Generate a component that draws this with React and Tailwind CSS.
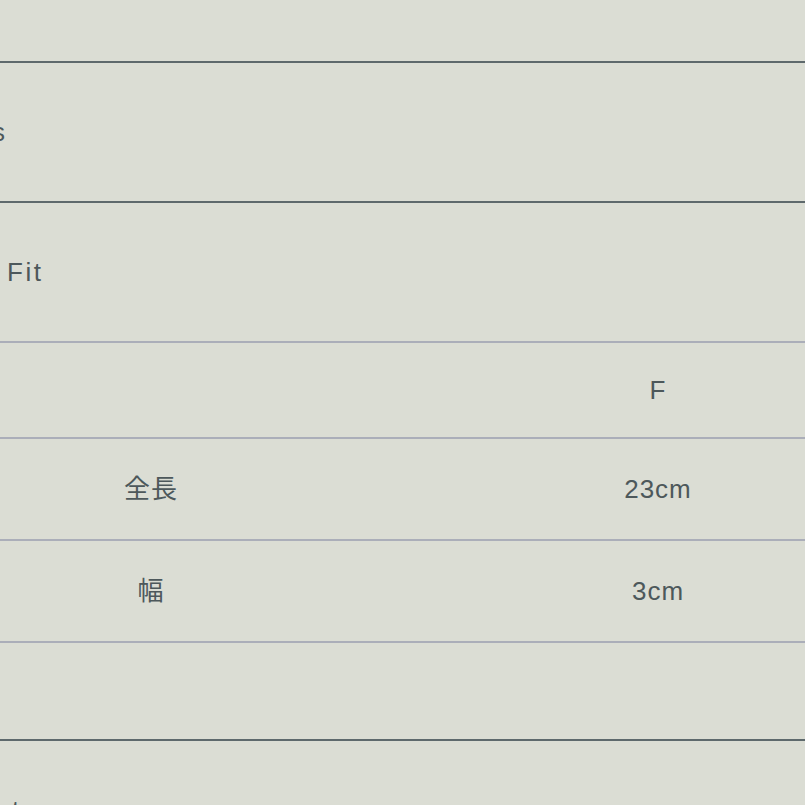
export default function App() {
  const rows = [
    { h: 'h-[140px]', line: 'border-[#5e696c]', left: 'Materials', cut: true },
    { h: 'h-[140px]', line: 'border-[#5e696c]', left: 'Fit', fitRow: true },
    { h: 'h-[96px]', line: 'border-[#abaeb9]', left: '', right: 'F' },
    { h: 'h-[102px]', line: 'border-[#abaeb9]', left: '全長', right: '23cm' },
    { h: 'h-[102px]', line: 'border-[#abaeb9]', left: '幅', right: '3cm' },
    { h: 'h-[98px]', line: 'border-[#abaeb9]', left: '', right: '' },
  ]

  return (
    <div
      className="w-[805px] h-[805px] overflow-hidden bg-[#dbddd4] text-[#4d585b] text-[26px] tracking-[1px]"
      style={{ fontFamily: '"Liberation Sans", "Noto Sans CJK JP", sans-serif' }}
    >
      <div className="h-[61px]" />
      {rows.map((r, i) => (
        <div key={i} className={`flex items-center border-t-2 ${r.line} ${r.h}`}>
          {r.cut ? (
            <div className="w-[6px] overflow-hidden flex justify-end whitespace-nowrap">
              <span>{r.left}</span>
            </div>
          ) : r.fitRow ? (
            <div className="pl-[7px] tracking-[2.5px]">{r.left}</div>
          ) : (
            <>
              <div className="w-[302px] shrink-0 text-center">{r.left}</div>
              <div className="w-[712px] shrink-0 text-center">{r.right}</div>
            </>
          )}
        </div>
      ))}
      <div className="border-t-2 border-[#5e696c] pt-[56px] pl-[12px] text-[26px] leading-none">t</div>
    </div>
  )
}
